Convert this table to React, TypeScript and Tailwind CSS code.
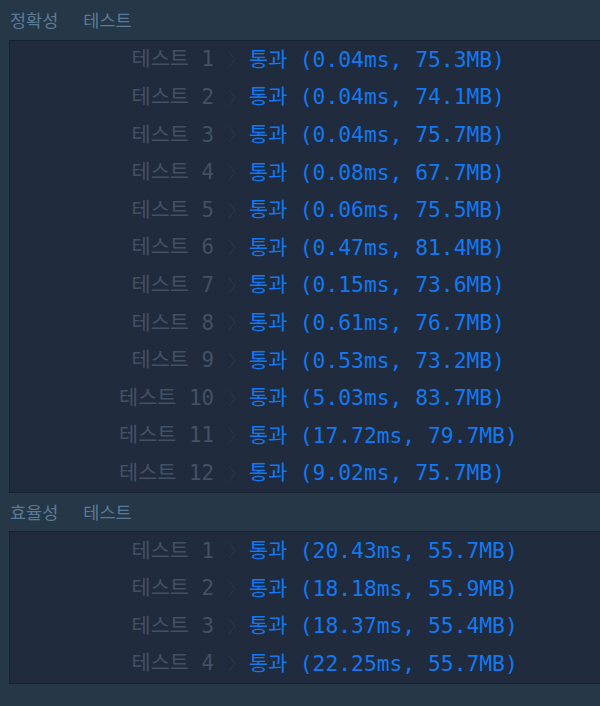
import React from "react";

const acc = [
  ["1", "0.04ms, 75.3MB"],
  ["2", "0.04ms, 74.1MB"],
  ["3", "0.04ms, 75.7MB"],
  ["4", "0.08ms, 67.7MB"],
  ["5", "0.06ms, 75.5MB"],
  ["6", "0.47ms, 81.4MB"],
  ["7", "0.15ms, 73.6MB"],
  ["8", "0.61ms, 76.7MB"],
  ["9", "0.53ms, 73.2MB"],
  ["10", "5.03ms, 83.7MB"],
  ["11", "17.72ms, 79.7MB"],
  ["12", "9.02ms, 75.7MB"],
];
const eff = [
  ["1", "20.43ms, 55.7MB"],
  ["2", "18.18ms, 55.9MB"],
  ["3", "18.37ms, 55.4MB"],
  ["4", "22.25ms, 55.7MB"],
];

const mono = { fontFamily: '"DejaVu Sans Mono", "Noto Sans CJK KR", monospace' };

function Row({ n, r }: { n: string; r: string }) {
  return (
    <div className="flex h-[37.6px] items-center whitespace-pre text-[20.8px] leading-none" style={mono}>
      <div className="w-[204px] text-right text-[#435165]">{`테스트 ${n}`}</div>
      <svg className="ml-[14px] shrink-0" width="8" height="17" viewBox="0 0 8 17">
        <polyline points="1,1 7,8.5 1,16" fill="none" stroke="#2b394c" strokeWidth="1" />
      </svg>
      <div className="ml-[13px] text-[#1279f2]">
        <span>통과 </span>
        <span className="text-[21.3px]">{`(${r})`}</span>
      </div>
    </div>
  );
}

function Header({ title, h }: { title: string; h: string }) {
  return (
    <div
      className={`flex items-center gap-[25px] pl-[10px] text-[17.5px] text-[#5a7b98] ${h}`}
      style={{ fontFamily: '"Noto Sans CJK KR", "Noto Sans", sans-serif' }}
    >
      <span>{title}</span>
      <span>테스트</span>
    </div>
  );
}

export default function App() {
  return (
    <div className="h-[706px] w-[600px] overflow-hidden bg-[#263747]">
      <Header title="정확성" h="h-[40px]" />
      <div className="ml-[9px] border border-r-0 border-[#172131] bg-[#202b3d]">
        {acc.map(([n, r]) => (
          <Row key={n} n={n} r={r} />
        ))}
      </div>
      <Header title="효율성" h="h-[38px]" />
      <div className="ml-[9px] border border-r-0 border-[#172131] bg-[#202b3d]">
        {eff.map(([n, r]) => (
          <Row key={n} n={n} r={r} />
        ))}
      </div>
    </div>
  );
}
